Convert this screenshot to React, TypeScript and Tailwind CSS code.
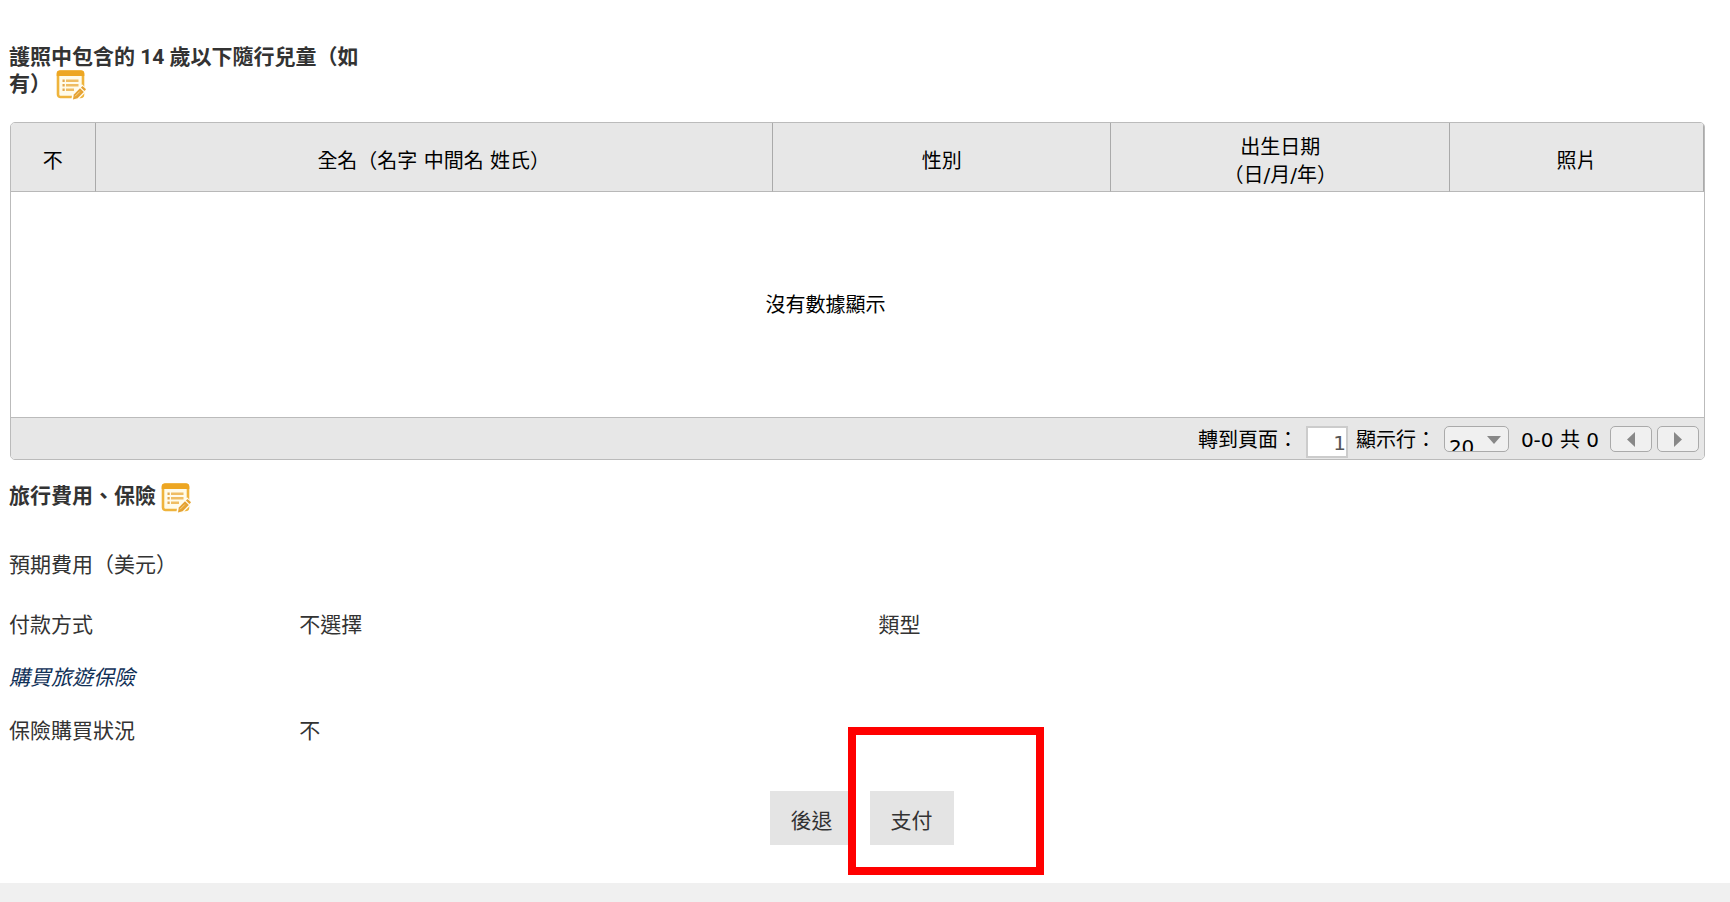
import type { ReactNode } from "react";

function EditIcon() {
  return (
    <svg viewBox="0 0 30 30" className="h-[30px] w-[30px]" aria-hidden="true">
      <rect x="2" y="1.5" width="25" height="25.5" rx="2.5" fill="#fffbe9" stroke="#efb43c" strokeWidth="2.6" />
      <path d="M.7 3.500a3 3 0 0 1 3-3.100h21.600a3 3 0 0 1 3 3V6H.7z" fill="#eda622" />
      <path d="M6.500 10.800h2.200M6.500 15.300h2.200M6.500 19.800h2.200" stroke="#e3a84e" strokeWidth="2.4" />
      <path d="M10 10.800h12.500M10 15.300h12.500M10 19.800h8" stroke="#efbd62" strokeWidth="2.4" />
      <path d="M16.500 30l.8-5.300 8.700-8.700 4 4-8.700 8.700z" fill="#fffdf4" stroke="#fffdf4" strokeWidth="2.400" />
      <path d="M17 29.500l.8-5 6.200-6.200 3.800 3.800-6.200 6.200z" fill="#e5a233" />
      <path d="M19 26.300l4.800-4.800" stroke="#f6d58f" strokeWidth="1" />
      <path d="M24.900 17.500l1.700-1.600 3.400 3.400-1.500 1.700z" fill="#e5a233" />
    </svg>
  );
}

function EditButton({ label }: { label: string }) {
  return (
    <button type="button" aria-label={label} className="block shrink-0 cursor-pointer">
      <EditIcon />
    </button>
  );
}

function FieldRow({ children, className }: { children: ReactNode; className: string }) {
  return <div className={`grid grid-cols-[290fr_579fr_835fr] items-center ${className}`}>{children}</div>;
}

function PagerButton({ label, points }: { label: string; points: string }) {
  return (
    <button
      type="button"
      aria-label={label}
      className="flex h-[26px] w-[42px] items-center justify-center rounded-[5px] border border-[#aaa] bg-[#f0f0f0]"
    >
      <svg viewBox="0 0 8 15" className="h-[15px] w-2" aria-hidden="true">
        <polygon points={points} fill="#888" />
      </svg>
    </button>
  );
}

const thClass = "border-b border-b-[#b8b8b8] px-0 pt-[7px] pb-0 font-normal";
const dividerClass = "border-r border-r-[#aaa]";

export default function App() {
  return (
    <div className="flex min-h-screen flex-col bg-white font-['Roboto','Noto_Sans_CJK_TC',sans-serif] text-[21px] leading-[27px] text-[#333]">
      <main className="flex-1 pt-11 pr-4 pb-[38px] pl-[9px]">
        <div className="relative h-[78px] w-[360px]">
          <h2 className="font-bold">
            護照中包含的 14 歲以下隨行兒童（如有）
          </h2>
          <div className="absolute top-[26px] left-[47px]">
            <EditButton label="編輯隨行兒童" />
          </div>
        </div>

        <section className="mr-[9px] ml-px overflow-hidden rounded-[5px] border border-[#bbb] font-['DejaVu_Sans','Noto_Sans_CJK_TC',sans-serif] text-[20px] leading-7 text-black">
          <table className="w-full table-fixed border-separate border-spacing-0">
            <thead className="bg-[#e7e7e7]">
              <tr className="h-[69px]">
                <th className={`w-[5%] ${thClass} ${dividerClass}`}>不</th>
                <th className={`w-[40%] ${thClass} ${dividerClass}`}>全名（名字 中間名 姓氏）</th>
                <th className={`w-[20%] ${thClass} ${dividerClass}`}>性別</th>
                <th className={`w-[20%] ${thClass} ${dividerClass}`}>
                  出生日期
                  <br />
                  （日/月/年）
                </th>
                <th className={`w-[15%] ${thClass} ${dividerClass}`}>照片</th>
              </tr>
            </thead>
            <tbody>
              <tr className="h-[225px]">
                <td colSpan={5} className="pr-16 text-center">
                  沒有數據顯示
                </td>
              </tr>
            </tbody>
          </table>

          <div className="flex h-[42px] items-start justify-end border-t border-[#bbb] bg-[#e7e7e7] pt-2 pr-[5px]">
            <label htmlFor="page" className="mr-2">
              轉到頁面：
            </label>
            <input
              id="page"
              type="text"
              defaultValue="1"
              className="mr-2 h-8 w-[42px] border-2 border-[#ccc] bg-white pt-0.5 text-right text-[20px] text-[#555]"
            />
            <label htmlFor="rows" className="mr-2">
              顯示行：
            </label>
            <div className="relative mr-3">
              <select
                id="rows"
                defaultValue="20"
                className="block h-[26px] w-[65px] appearance-none overflow-hidden rounded-[5px] border border-[#aaa] bg-[#f0f0f0] pt-[6px] pl-1 text-[20px] leading-7 text-black"
              >
                <option>10</option>
                <option>20</option>
                <option>50</option>
              </select>
              <svg viewBox="0 0 14 8" className="pointer-events-none absolute top-[10px] right-2 h-2 w-[14px]" aria-hidden="true">
                <polygon points="0,0 14,0 7,8" fill="#888" />
              </svg>
            </div>
            <span className="mr-[11px]">0-0 共 0</span>
            <div className="flex gap-[5px]">
              <PagerButton label="上一頁" points="8,0 8,15 0,7.5" />
              <PagerButton label="下一頁" points="0,0 0,15 8,7.5" />
            </div>
          </div>
        </section>

        <div className="mt-[23px] flex items-start gap-[5px]">
          <h2 className="font-bold">旅行費用、保險</h2>
          <EditButton label="編輯旅行費用" />
        </div>

        <FieldRow className="mt-[39px]">
          <span>預期費用（美元）</span>
        </FieldRow>
        <FieldRow className="mt-[33px]">
          <span>付款方式</span>
          <span>不選擇</span>
          <span>類型</span>
        </FieldRow>
        <p className="mt-[26px]">
          <a href="#insurance" className="text-[#0f3057] italic">
            購買旅遊保險
          </a>
        </p>
        <FieldRow className="mt-[26px]">
          <span>保險購買狀況</span>
          <span>不</span>
        </FieldRow>

        <div className="mt-[46px] flex justify-center gap-4">
          <button type="button" className="h-[54px] w-[84px] bg-[#e4e4e4] pt-[6px]">
            後退
          </button>
          <div className="relative">
            <button type="button" className="h-[54px] w-[84px] bg-[#e4e4e4] pt-[6px]">
              支付
            </button>
            <div className="pointer-events-none absolute -top-16 -left-[22px] h-[148px] w-[196px] border-8 border-[#f00]" />
          </div>
        </div>
      </main>
      <footer className="h-5 bg-[#f0f0f0]" />
    </div>
  );
}
